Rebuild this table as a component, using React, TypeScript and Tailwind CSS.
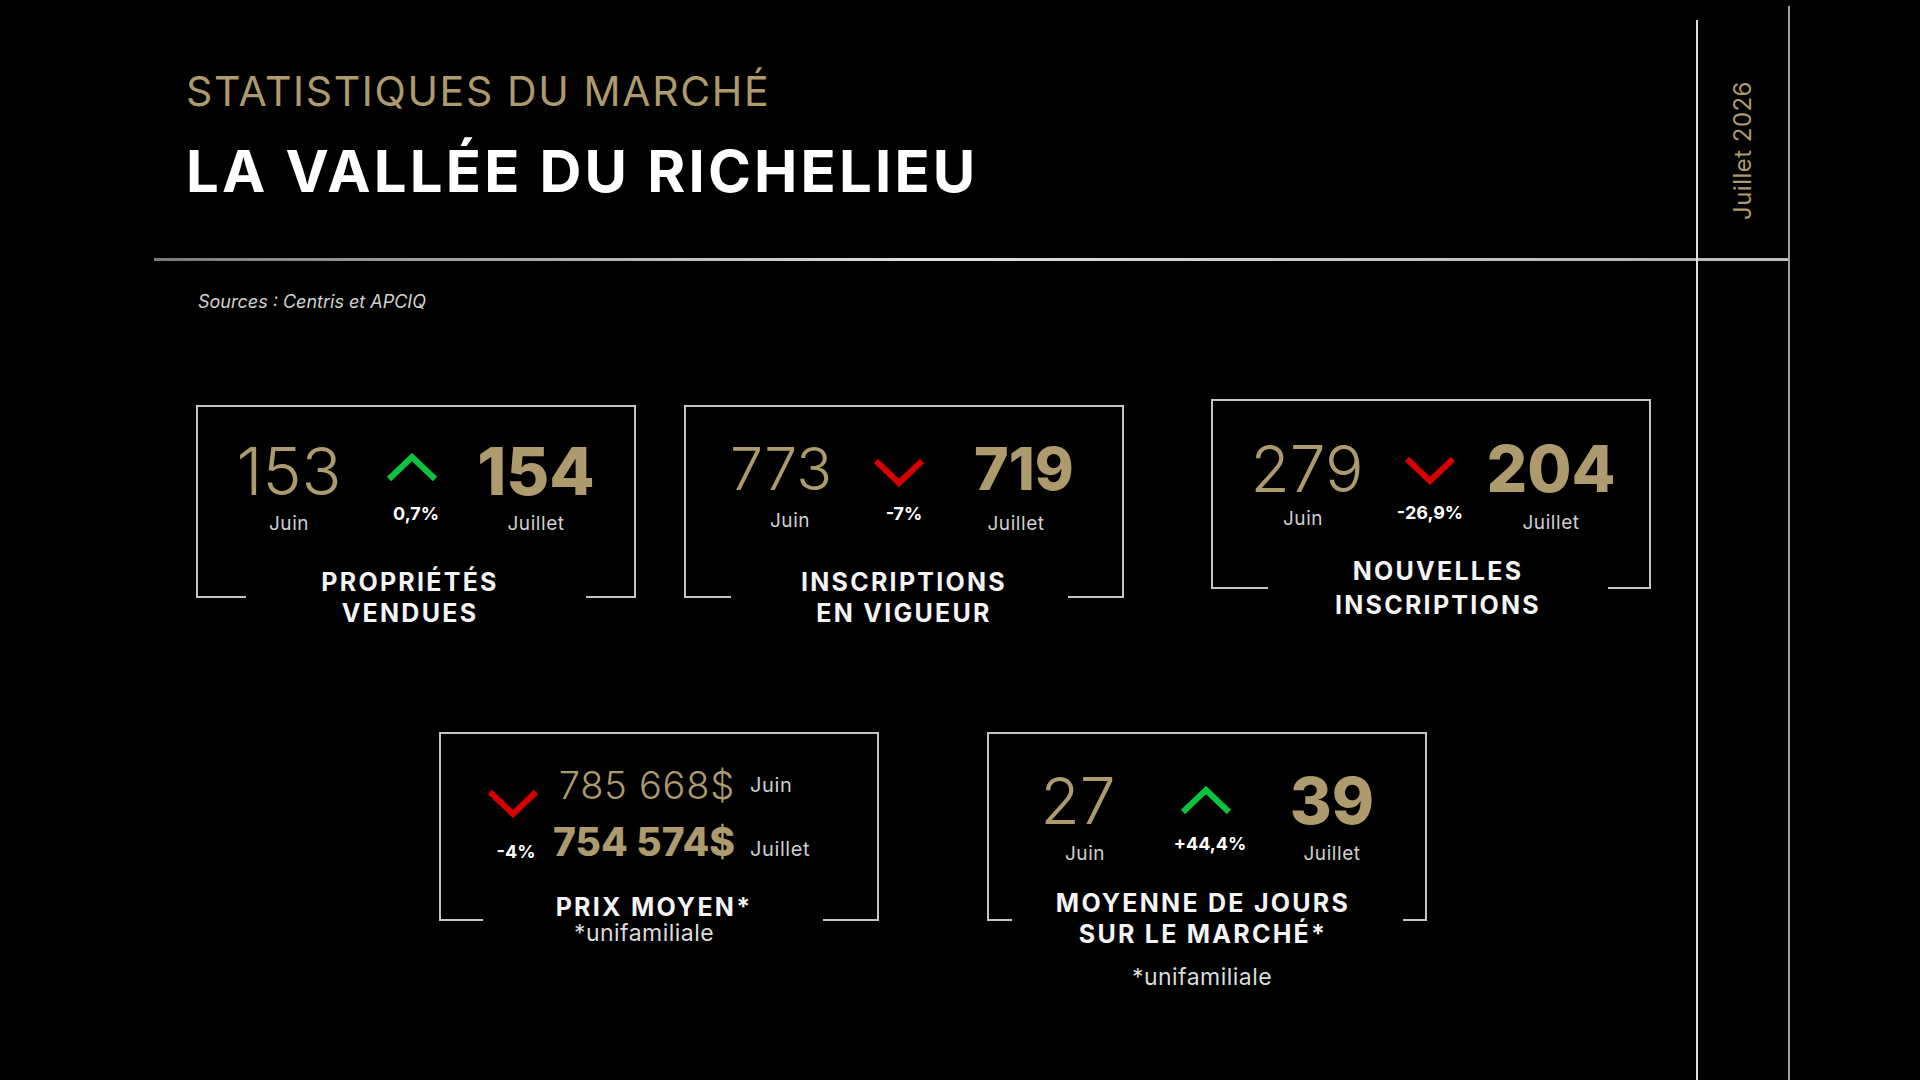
import type { ReactNode } from 'react';

const gold = 'text-[#ad9a6d]';

function Chevron({ up }: { up?: boolean }) {
  return (
    <svg width="54" height="30" viewBox="0 0 54 30" className="block">
      <polyline
        points={up ? '4,26 27,4 50,26' : '4,4 27,26 50,4'}
        fill="none"
        stroke={up ? '#0bc33f' : '#d60000'}
        strokeWidth="6"
        strokeLinejoin="miter"
      />
    </svg>
  );
}

// frame with a gap in the bottom edge where the title sits
function Frame({
  box,
  segL,
  segR,
  children,
}: {
  box: string;
  segL: string;
  segR: string;
  children: ReactNode;
}) {
  return (
    <div className={`flex flex-col w-[440px] border-t-2 border-x-2 border-[#c4c4c4] ${box}`}>
      <div className="flex-1">{children}</div>
      <div className="flex justify-between">
        <div className={`h-[2px] bg-[#c4c4c4] ${segL}`} />
        <div className={`h-[2px] bg-[#c4c4c4] ${segR}`} />
      </div>
    </div>
  );
}

function Title({ className, children }: { className: string; children: ReactNode }) {
  return (
    <div className={`text-center text-[#f4f4f4] font-bold text-[25px] tracking-[0.09em] whitespace-nowrap ${className}`}>
      {children}
    </div>
  );
}

function Label({ className, children }: { className: string; children: ReactNode }) {
  return <div className={`text-[19px] leading-none tracking-[0.03em] text-[#cfcfcf] ${className}`}>{children}</div>;
}

function Pct({ className, children }: { className: string; children: ReactNode }) {
  return <div className={`text-[18px] leading-none font-bold text-white ${className}`}>{children}</div>;
}

export default function App() {
  return (
    <div className="w-[1920px] h-[1080px] bg-black flex overflow-hidden font-['Inter','Liberation_Sans',sans-serif]">
      <div className="w-[1696px] flex flex-col">
        <header className="h-[258px] pl-[186px] flex flex-col">
          <h2 className={`mt-[71px] text-[41px] leading-none tracking-[0.04em] ${gold}`}>STATISTIQUES DU MARCHÉ</h2>
          <h1 className="mt-[30px] text-[58px] leading-none font-bold tracking-[0.055em] text-white">
            LA VALLÉE DU RICHELIEU
          </h1>
        </header>
        <div className="ml-[154px] h-[3px] bg-linear-to-r from-[#7a7a7a] via-[#e0e0e0] to-[#b4b4b4]" />

        <p className="ml-[198px] mt-[32px] text-[18px] leading-none italic text-[#d2d2d2]">Sources : Centris et APCIQ</p>

        {/* first row */}
        <div className="flex items-start mt-[88px] pl-[196px]">
          <div className="flex flex-col mt-[6px]">
            <Frame box="h-[193px]" segL="w-[48px]" segR="w-[48px]">
              <div className="flex pt-[31px] pl-[26px]">
                <div className="w-[130px] flex flex-col items-center">
                  <div className={`text-[66px] leading-none font-light ${gold}`}>153</div>
                  <Label className="mt-[10px]">Juin</Label>
                </div>
                <div className="w-[116px] flex flex-col items-center">
                  <div className="mt-[15px]"><Chevron up /></div>
                  <Pct className="mt-[22px] ml-[8px]">0,7%</Pct>
                </div>
                <div className="w-[132px] flex flex-col items-center">
                  <div className={`text-[66px] leading-none font-extrabold ${gold}`}>154</div>
                  <Label className="mt-[10px]">Juillet</Label>
                </div>
              </div>
            </Frame>
            <Title className="-mt-[31px] leading-[31px] mr-[12px]">
              PROPRIÉTÉS
              <br />
              VENDUES
            </Title>
          </div>

          <div className="flex flex-col mt-[6px] ml-[48px]">
            <Frame box="h-[193px]" segL="w-[45px]" segR="w-[54px]">
              <div className="flex pt-[32px] pl-[26px]">
                <div className="w-[138px] flex flex-col items-center">
                  <div className={`text-[59px] leading-none font-light ${gold}`}>773</div>
                  <Label className="mt-[13px] ml-[18px]">Juin</Label>
                </div>
                <div className="w-[98px] flex flex-col items-center">
                  <div className="mt-[18px]"><Chevron /></div>
                  <Pct className="mt-[18px] ml-[10px]">-7%</Pct>
                </div>
                <div className="w-[152px] flex flex-col items-center">
                  <div className={`text-[59px] leading-none font-extrabold ${gold}`}>719</div>
                  <Label className="mt-[16px] mr-[16px]">Juillet</Label>
                </div>
              </div>
            </Frame>
            <Title className="-mt-[31px] leading-[31px]">
              INSCRIPTIONS
              <br />
              EN VIGUEUR
            </Title>
          </div>

          <div className="flex flex-col ml-[87px]">
            <Frame box="h-[190px]" segL="w-[55px]" segR="w-[41px]">
              <div className="flex pt-[36px] pl-[26px]">
                <div className="w-[136px] flex flex-col items-center">
                  <div className={`text-[64px] leading-none font-light ${gold}`}>279</div>
                  <Label className="mt-[8px] mr-[8px]">Juin</Label>
                </div>
                <div className="w-[110px] flex flex-col items-center">
                  <div className="mt-[18px]"><Chevron /></div>
                  <Pct className="mt-[19px]">-26,9%</Pct>
                </div>
                <div className="w-[132px] flex flex-col items-center">
                  <div className={`text-[64px] leading-none font-extrabold ${gold}`}>204</div>
                  <Label className="mt-[12px]">Juillet</Label>
                </div>
              </div>
            </Frame>
            <Title className="-mt-[35px] leading-[34px] ml-[14px]">
              NOUVELLES
              <br />
              INSCRIPTIONS
            </Title>
          </div>
        </div>

        {/* second row */}
        <div className="flex items-start mt-[103px] pl-[439px]">
          <div className="flex flex-col">
            <Frame box="h-[189px]" segL="w-[42px]" segR="w-[54px]">
              <div className="flex">
                <div className="w-[92px] ml-[26px] flex flex-col items-center">
                  <div className="mt-[54px]"><Chevron /></div>
                  <Pct className="mt-[25px] ml-[6px] text-[17px]">-4%</Pct>
                </div>
                <div className="flex flex-col pt-[32px]">
                  <div className="flex items-center">
                    <div className="w-[176px] flex justify-end">
                      <span className={`whitespace-nowrap text-[38px] leading-none font-light tracking-[0.02em] ${gold}`}>785 668$</span>
                    </div>
                    <Label className="ml-[15px] text-[20px]">Juin</Label>
                  </div>
                  <div className="flex items-baseline mt-[18px]">
                    <div className="w-[176px] flex justify-end">
                      <span className={`whitespace-nowrap text-[39px] leading-none font-extrabold ${gold}`}>754 574$</span>
                    </div>
                    <Label className="ml-[15px] text-[20px]">Juillet</Label>
                  </div>
                </div>
              </div>
            </Frame>
            <Title className="-mt-[29px] leading-[30px] mr-[10px]">PRIX MOYEN*</Title>
            <div className="text-center text-[23px] leading-[22px] tracking-[0.02em] text-[#dcdcdc] mr-[30px]">*unifamiliale</div>
          </div>

          <div className="flex flex-col ml-[108px]">
            <Frame box="h-[189px]" segL="w-[23px]" segR="w-[22px]">
              <div className="flex pt-[35px] pl-[26px]">
                <div className="w-[126px] flex flex-col items-center">
                  <div className={`text-[64px] leading-none font-light ${gold}`}>27</div>
                  <Label className="mt-[11px] ml-[14px]">Juin</Label>
                </div>
                <div className="w-[130px] flex flex-col items-center">
                  <div className="mt-[17px]"><Chevron up /></div>
                  <Pct className="mt-[19px] ml-[8px]">+44,4%</Pct>
                </div>
                <div className="w-[122px] flex flex-col items-center">
                  <div className={`text-[64px] leading-none font-extrabold ${gold}`}>39</div>
                  <Label className="mt-[11px]">Juillet</Label>
                </div>
              </div>
            </Frame>
            <Title className="-mt-[33px] leading-[31px] mr-[8px]">
              MOYENNE DE JOURS
              <br />
              SUR LE MARCHÉ*
            </Title>
            <div className="mt-[16px] text-center text-[23px] leading-[22px] tracking-[0.02em] text-[#dcdcdc] mr-[10px]">*unifamiliale</div>
          </div>
        </div>
      </div>

      <div className="w-[2px] mt-[20px] bg-[#dedede]" />
      <div className="w-[90px] flex flex-col">
        <div className="h-[258px] flex justify-center">
          <span className={`mt-[78px] h-[142px] text-[24px] leading-none tracking-[0.02em] whitespace-nowrap [writing-mode:vertical-rl] rotate-180 ${gold}`}>
            Juillet 2026
          </span>
        </div>
        <div className="h-[3px] bg-[#bdbdbd]" />
      </div>
      <div className="w-[2px] mt-[6px] bg-[#a0a0a0]" />
    </div>
  );
}
